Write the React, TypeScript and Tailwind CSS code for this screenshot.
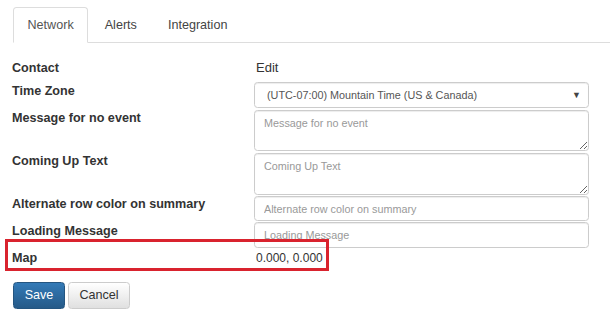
import React from 'react';

const tabs = ['Network', 'Alerts', 'Integration'];

const labelCls = 'text-[12.6px] font-bold text-[#333] leading-[14px]';
const fieldCls =
  'w-full border border-[#ccc] rounded-[3.5px] bg-white px-[9px] text-[10.8px] text-[#555] placeholder:text-[#999] shadow-[inset_0_1px_1px_rgba(0,0,0,0.075)] outline-none';

const App: React.FC = () => {
  return (
    <div
      className="relative w-[610px] h-[328px] overflow-hidden bg-white pl-[12px]"
      style={{ fontFamily: '"Liberation Sans", Arial, sans-serif' }}
    >
      {/* Tabs */}
      <div className="mt-[7px] ml-[1px] flex border-b border-[#ddd]">
        {tabs.map((tab, i) => (
          <div
            key={tab}
            className={`mr-[2px] -mb-px px-[13.5px] py-[9px] text-[12.6px] leading-[16px] rounded-t-[3.5px] border ${
              i === 0
                ? 'bg-white border-[#ddd] border-b-white text-[#555]'
                : 'border-transparent text-[#444]'
            }`}
          >
            {tab}
          </div>
        ))}
      </div>

      {/* Form rows */}
      <div className="mt-[17px] grid grid-cols-[242px_335px] items-start">
        <div className={`${labelCls} pt-[1px]`}>Contact</div>
        <div className="pl-[2px] pt-[1px] text-[13px] leading-[14px] text-[#333]">Edit</div>

        <div className={`${labelCls} mt-[7px] pt-[2px]`}>Time Zone</div>
        <div className="relative mt-[7px]">
          <div className={`${fieldCls} h-[26px] flex items-center pl-[12px] text-[#555]`}>
            (UTC-07:00) Mountain Time (US &amp; Canada)
          </div>
          <span className="absolute right-[8px] top-[7px] text-[9px] text-[#444]">▼</span>
        </div>

        <div className={`${labelCls} mt-[2px] pt-[1px] leading-[12px]`}>Message for no event</div>
        <textarea
          className={`${fieldCls} mt-[2px] h-[41px] py-[4px] block`}
          placeholder="Message for no event"
        />

        <div className={`${labelCls} mt-[2px] pt-[1px] leading-[12px]`}>Coming Up Text</div>
        <textarea
          className={`${fieldCls} mt-[2px] h-[42px] py-[4px] block`}
          placeholder="Coming Up Text"
        />

        <div className={`${labelCls} mt-[1px] pt-[1px] leading-[12px]`}>Alternate row color on summary</div>
        <input
          className={`${fieldCls} mt-[1px] h-[25px] block`}
          placeholder="Alternate row color on summary"
        />

        <div className={`${labelCls} mt-[1px] pt-[2px]`}>Loading Message</div>
        <input
          className={`${fieldCls} mt-[1px] h-[26px] block`}
          placeholder="Loading Message"
        />

        <div className={`${labelCls} mt-[1px] pt-[2px]`}>Map</div>
        <div className="mt-[1px] pl-[2px] pt-[2px] text-[12px] leading-[14px] text-[#333]">0.000, 0.000</div>
      </div>

      {/* Buttons */}
      <div className="mt-[17px] ml-[1px] flex gap-[3px]">
        <button className="h-[27px] w-[52px] rounded-[3.5px] border border-[#245580] bg-gradient-to-b from-[#337ab7] to-[#265a88] text-[12.6px] text-white">
          Save
        </button>
        <button className="h-[27px] w-[62px] rounded-[3.5px] border border-[#ccc] bg-gradient-to-b from-white to-[#e0e0e0] text-[12.6px] text-[#333]">
          Cancel
        </button>
      </div>

      {/* Annotation highlight */}
      <div className="absolute left-[5px] top-[239px] w-[324px] h-[32px] border-[3px] border-[#d9232e]" />
    </div>
  );
};

export default App;
